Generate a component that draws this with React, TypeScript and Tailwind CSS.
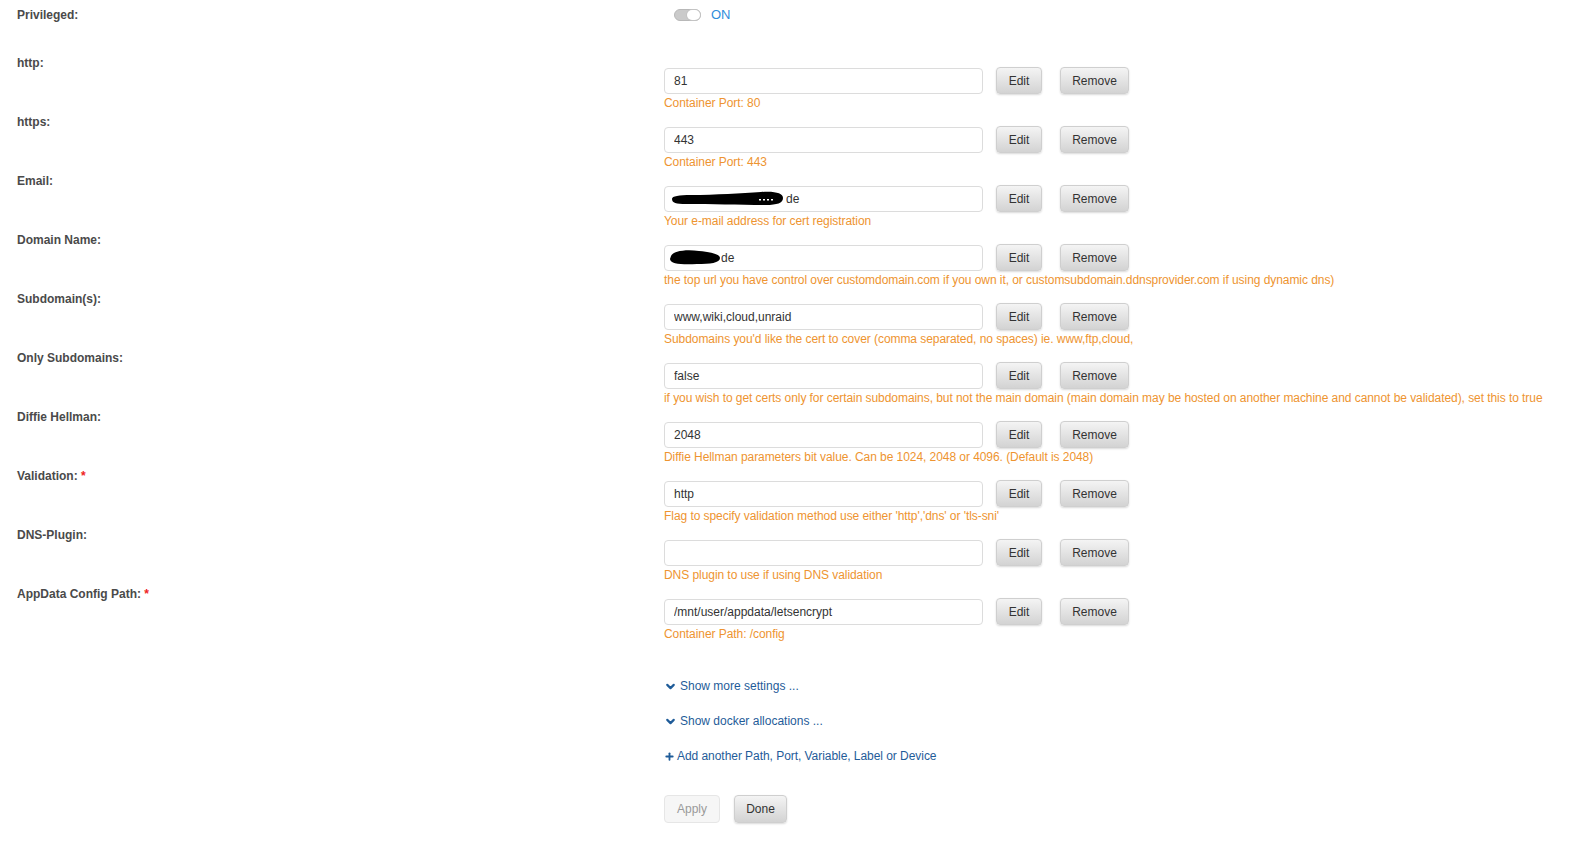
import React from 'react';
import { ChevronDown, Plus } from 'lucide-react';

type Row = {
    label: string;
    value: string;
    desc: string;
    required?: boolean;
    blob?: 'email' | 'domain';
};

const rows: Row[] = [
    { label: 'http:', value: '81', desc: 'Container Port: 80' },
    { label: 'https:', value: '443', desc: 'Container Port: 443' },
    { label: 'Email:', value: 'de', desc: 'Your e-mail address for cert registration', blob: 'email' },
    { label: 'Domain Name:', value: 'de', desc: 'the top url you have control over customdomain.com if you own it, or customsubdomain.ddnsprovider.com if using dynamic dns)', blob: 'domain' },
    { label: 'Subdomain(s):', value: 'www,wiki,cloud,unraid', desc: "Subdomains you'd like the cert to cover (comma separated, no spaces) ie. www,ftp,cloud," },
    { label: 'Only Subdomains:', value: 'false', desc: 'if you wish to get certs only for certain subdomains, but not the main domain (main domain may be hosted on another machine and cannot be validated), set this to true' },
    { label: 'Diffie Hellman:', value: '2048', desc: 'Diffie Hellman parameters bit value. Can be 1024, 2048 or 4096. (Default is 2048)' },
    { label: 'Validation:', value: 'http', desc: "Flag to specify validation method use either 'http','dns' or 'tls-sni'", required: true },
    { label: 'DNS-Plugin:', value: '', desc: 'DNS plugin to use if using DNS validation' },
    { label: 'AppData Config Path:', value: '/mnt/user/appdata/letsencrypt', desc: 'Container Path: /config', required: true },
];

const btn =
    'h-[27px] rounded-[4px] border border-[#cfcfcf] bg-gradient-to-b from-[#f4f4f4] to-[#d3d3d3] text-[12px] text-[#333] shadow-[0_1px_2px_rgba(0,0,0,0.15)]';

// redaction scribbles over the private values
function EmailBlob() {
    return (
        <svg className="absolute left-[7px] top-[5px]" width="114" height="16" viewBox="0 0 114 16">
            <path d="M1 8 C 1 5, 8 4, 20 4 C 45 4, 70 2, 90 1 C 104 0, 112 2, 112 7 C 112 12, 106 14, 95 14 C 70 14, 40 13, 15 13 C 5 13, 1 12, 1 8 Z" fill="#000" />
            <rect x="88" y="8" width="2" height="1.5" fill="#fff" />
            <rect x="92" y="8" width="2" height="1.5" fill="#fff" />
            <rect x="96" y="8" width="2" height="1.5" fill="#fff" />
            <rect x="100" y="8" width="2" height="1.5" fill="#fff" />
        </svg>
    );
}

function DomainBlob() {
    return (
        <svg className="absolute left-[4px] top-[3px]" width="54" height="19" viewBox="0 0 54 19">
            <path d="M3 8 C 5 3, 18 1, 31 3 C 42 4, 52 6, 52 10 C 52 15, 42 16, 29 16 C 15 17, 2 16, 2 11 Z" fill="#000" />
        </svg>
    );
}

export default function App() {
    return (
        <div className="min-h-screen bg-white pt-[5px] font-['Liberation_Sans',Arial,sans-serif] text-[12px]">
            {/* Privileged */}
            <div className="flex h-[48px] items-start">
                <div className="w-[664px] shrink-0 pl-[17px] font-bold leading-5 text-[#4a4a4a]">Privileged:</div>
                <div className="flex h-5 items-center gap-[10px] pl-[10px]">
                    <div className="flex h-[12px] w-[27px] justify-end rounded-full border border-[#b8b8b8] bg-[#cacaca]">
                        <div className="h-[10px] w-[13px] rounded-full bg-white shadow-[0_0_0_1px_#c4c4c4]"></div>
                    </div>
                    <span className="text-[13px] text-[#2f8ddc]">ON</span>
                </div>
            </div>

            {rows.map((r) => (
                <div key={r.label} className="flex h-[59px] items-start">
                    <div className="w-[664px] shrink-0 pl-[17px] font-bold leading-5 text-[#4a4a4a]">
                        {r.label}
                        {r.required && <span className="text-[#e22]"> *</span>}
                    </div>
                    <div className="flex flex-col pt-[14px]">
                        <div className="flex items-center">
                            <div className="relative">
                                <input
                                    readOnly
                                    value={r.value}
                                    className={`h-[26px] w-[319px] rounded-[4px] border border-[#dcdcdc] bg-white pr-2 text-[12px] text-[#333] outline-none ${
                                        r.blob === 'email' ? 'pl-[121px]' : r.blob === 'domain' ? 'pl-[56px]' : 'pl-[9px]'
                                    }`}
                                />
                                {r.blob === 'email' && <EmailBlob />}
                                {r.blob === 'domain' && <DomainBlob />}
                            </div>
                            <button className={`${btn} ml-[13px] w-[46px]`}>Edit</button>
                            <button className={`${btn} ml-[18px] w-[69px]`}>Remove</button>
                        </div>
                        <div className="whitespace-nowrap leading-[18px] tracking-[-0.06px] text-[#ee9430]">{r.desc}</div>
                    </div>
                </div>
            ))}

            <div className="ml-[664px] flex flex-col gap-[15px] pt-[33px] text-[#1f5c99]">
                <div className="flex h-5 items-center gap-[3px]">
                    <ChevronDown size={13} strokeWidth={4} />
                    <span>Show more settings ...</span>
                </div>
                <div className="flex h-5 items-center gap-[3px]">
                    <ChevronDown size={13} strokeWidth={4} />
                    <span>Show docker allocations ...</span>
                </div>
                <div className="flex h-5 items-center gap-[2px]">
                    <Plus size={11} strokeWidth={4} />
                    <span className="tracking-[-0.05px]">Add another Path, Port, Variable, Label or Device</span>
                </div>
            </div>

            <div className="ml-[664px] flex gap-[14px] pt-[29px] pb-4">
                <button className="h-[28px] w-[56px] rounded-[4px] border border-[#e6e6e6] bg-[#f6f6f6] text-[12px] text-[#9a9a9a]">
                    Apply
                </button>
                <button className={`${btn} h-[28px] w-[53px]`}>Done</button>
            </div>
        </div>
    );
}
